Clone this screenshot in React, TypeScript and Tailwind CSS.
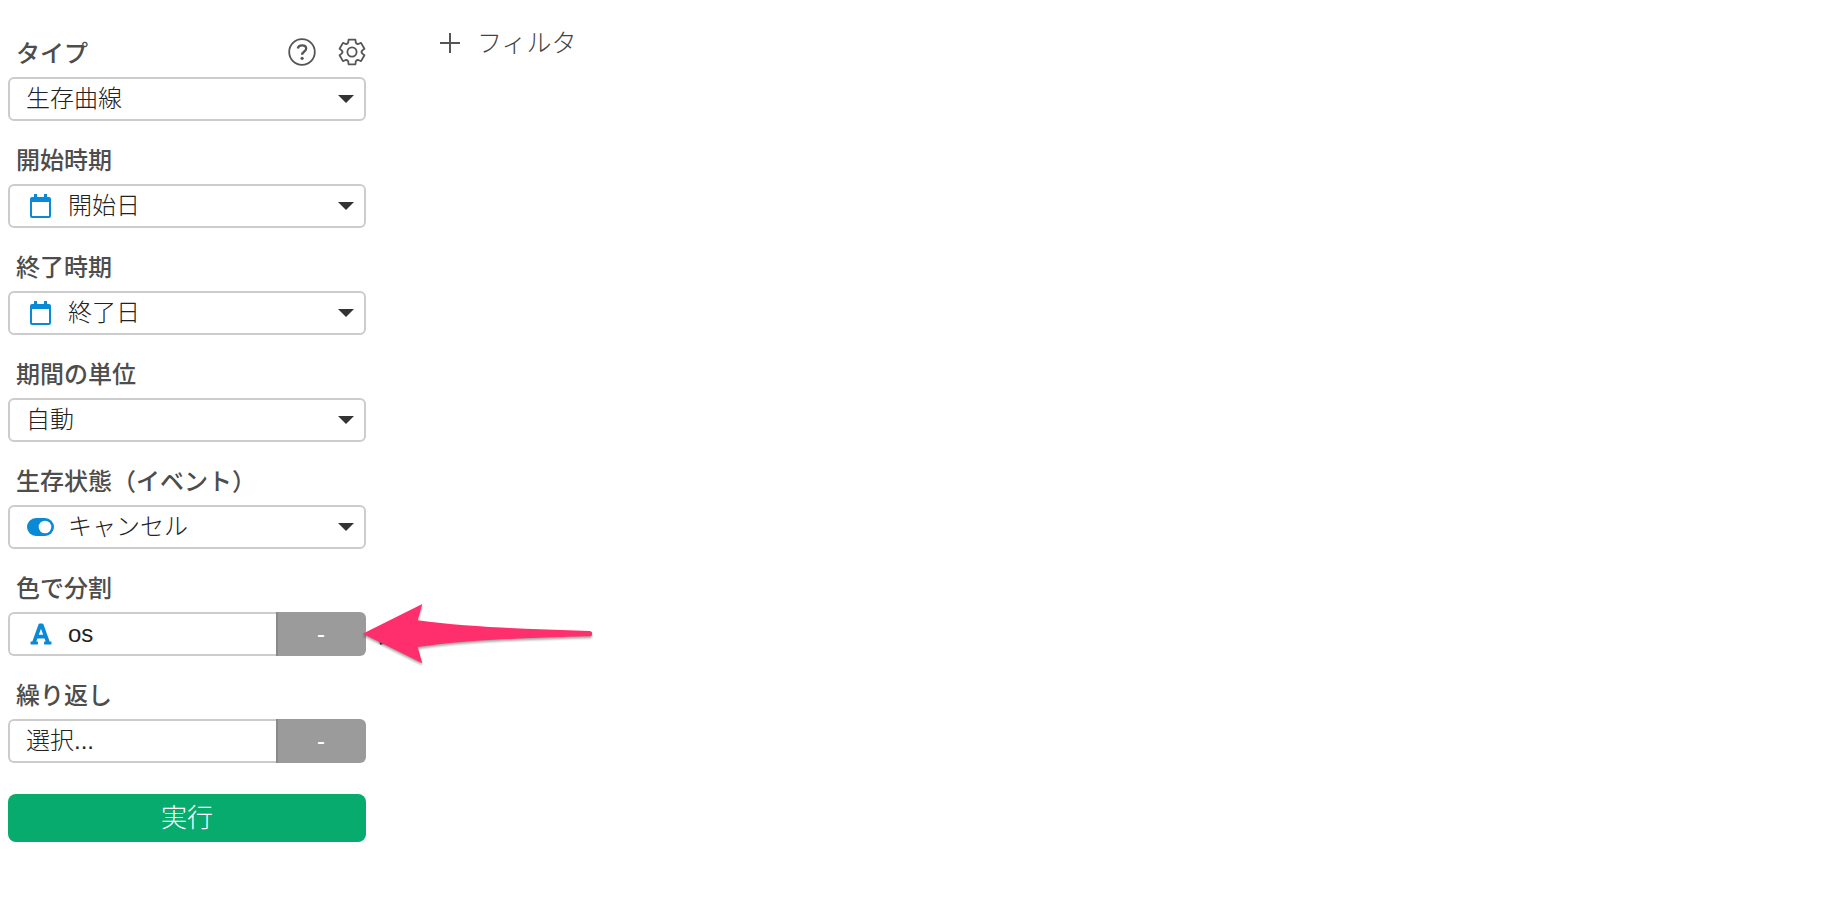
import type { ReactNode } from "react";
import { FaFont } from "react-icons/fa";

const CalendarIcon = () => (
  <svg viewBox="0 0 21 24" className="h-6 w-[21px] text-[#0a8ad6]" fill="currentColor" aria-hidden="true">
    <path
      fillRule="evenodd"
      d="M4 0h3v3h7V0h3v3h2a2 2 0 0 1 2 2v17a2 2 0 0 1-2 2H2a2 2 0 0 1-2-2V5a2 2 0 0 1 2-2h2zM2 8v14h17V8z"
    />
  </svg>
);

const ToggleIcon = () => (
  <svg viewBox="0 0 27 18" className="h-[18px] w-[27px]" aria-hidden="true">
    <rect width="27" height="18" rx="9" fill="#0a8ad6" />
    <circle cx="18" cy="9" r="6.3" fill="#fff" />
  </svg>
);

const HelpIcon = () => (
  <svg viewBox="0 0 28 28" className="size-7" fill="none" stroke="currentColor" aria-hidden="true">
    <circle cx="14" cy="14" r="12.8" strokeWidth="1.8" />
    <path d="M9.800 10.400c.4-2 2-3 4.200-3 2.400 0 4.200 1.200 4.200 3.200 0 2.900-4.100 2.900-4.100 6.200" strokeWidth="2.300" />
    <circle cx="14.100" cy="20.300" r="1.600" fill="currentColor" stroke="none" />
  </svg>
);

// six teeth, walked clockwise from the top one
const gearPath = () => {
  const tooth = [
    [-5.2, -8],
    [-3.8, -9.4],
    [-3.4, -12.4],
    [3.4, -12.4],
    [3.8, -9.4],
    [5.2, -8],
  ];
  const points: string[] = [];
  for (let i = 0; i < 6; i++) {
    const a = (i * Math.PI) / 3;
    tooth.forEach(([x, y]) => {
      const px = 14 + x * Math.cos(a) - y * Math.sin(a);
      const py = 14 + x * Math.sin(a) + y * Math.cos(a);
      points.push(`${px.toFixed(2)} ${py.toFixed(2)}`);
    });
  }
  return `M${points.join("L")}Z`;
};

const GearIcon = () => (
  <svg
    viewBox="0 0 28 28"
    className="size-7"
    fill="none"
    stroke="currentColor"
    strokeWidth="1.8"
    strokeLinejoin="round"
    aria-hidden="true"
  >
    <path d={gearPath()} />
    <circle cx="14" cy="14" r="4.6" />
  </svg>
);

const Arrow = () => (
  <svg
    viewBox="0 0 236 70"
    className="pointer-events-none absolute top-[-13px] left-full ml-[-6px] h-[70px] w-[236px] max-w-none"
    aria-hidden="true"
  >
    <path
      d="M2.700 34.700L62.300 5L57.700 21.300C110 28.500 170 30 229.500 32a2.600 2.600 0 0 1 0 5.300C170 39 110 40 57.700 48L62.300 64.300Z"
      fill="#ff2e6c"
      className="drop-shadow-[0_2px_1px_rgba(0,0,0,0.35)]"
    />
    <path d="M19.500 43L23.500 45L20 45.800Z" fill="#333" />
  </svg>
);

type FieldProps = {
  id: string;
  label: string;
  value: string;
  icon?: ReactNode;
  actions?: ReactNode;
  removable?: boolean;
  children?: ReactNode;
};

const Field = ({ id, label, value, icon, actions, removable, children }: FieldProps) => (
  <div className="pt-5">
    <div className="mb-[7px] flex h-9 items-center justify-between pl-2">
      <label htmlFor={id} className="pt-1 text-2xl leading-9 font-medium text-[#4d4d4d]">
        {label}
      </label>
      {actions}
    </div>
    <div className="relative flex h-11">
      <div
        className={
          removable
            ? "relative flex flex-1 items-center rounded-l-md border-2 border-r-0 border-[#ccc] pl-4"
            : "relative flex flex-1 items-center rounded-md border-2 border-[#ccc] pl-4"
        }
      >
        {icon && <span className="mr-[13px] flex w-[29px] shrink-0 justify-center">{icon}</span>}
        <select id={id} className="h-full min-w-0 flex-1 appearance-none bg-transparent text-2xl font-light text-[#222] outline-none">
          <option>{value}</option>
        </select>
        {!removable && (
          <svg viewBox="0 0 16 8" className="pointer-events-none absolute right-[10px] h-2 w-4" fill="#333" aria-hidden="true">
            <path d="M0 0h16L8 8z" />
          </svg>
        )}
      </div>
      {removable && (
        <button
          type="button"
          aria-label={`${label}を解除`}
          className="w-[90px] rounded-r-md border-l-2 border-[#8a8a8a] bg-[#9b9b9b] pr-0.5 text-2xl text-white"
        >
          -
        </button>
      )}
      {children}
    </div>
  </div>
);

const App = () => {
  return (
    <div className="flex min-h-screen bg-white font-['Liberation_Sans','Noto_Sans_CJK_JP',sans-serif]">
      <aside className="w-[374px] shrink-0 px-2 pt-[14px]">
        <Field
          id="type"
          label="タイプ"
          value="生存曲線"
          actions={
            <div className="flex gap-[22px] text-[#555]">
              <button type="button" aria-label="ヘルプ">
                <HelpIcon />
              </button>
              <button type="button" aria-label="設定">
                <GearIcon />
              </button>
            </div>
          }
        />
        <Field id="start" label="開始時期" value="開始日" icon={<CalendarIcon />} />
        <Field id="end" label="終了時期" value="終了日" icon={<CalendarIcon />} />
        <Field id="unit" label="期間の単位" value="自動" />
        <Field id="event" label="生存状態（イベント）" value="キャンセル" icon={<ToggleIcon />} />
        <Field id="color" label="色で分割" value="os" icon={<FaFont className="size-6 text-[#0a8ad6]" />} removable>
          <Arrow />
        </Field>
        <Field id="repeat" label="繰り返し" value="選択..." removable />
        <button type="button" className="mt-[31px] h-12 w-full rounded-lg bg-[#06ab6d] text-[26px] leading-9 font-light text-white">
          実行
        </button>
      </aside>
      <main className="flex-1 pt-[25px] pl-[65px]">
        <button type="button" className="flex items-center gap-4 text-[25px] leading-9 font-light text-[#444]">
          <svg viewBox="0 0 22 22" className="size-[22px]" stroke="#555" strokeWidth="2" aria-hidden="true">
            <path d="M11 1v20M1 11h20" />
          </svg>
          フィルタ
        </button>
      </main>
    </div>
  );
};

export default App;
